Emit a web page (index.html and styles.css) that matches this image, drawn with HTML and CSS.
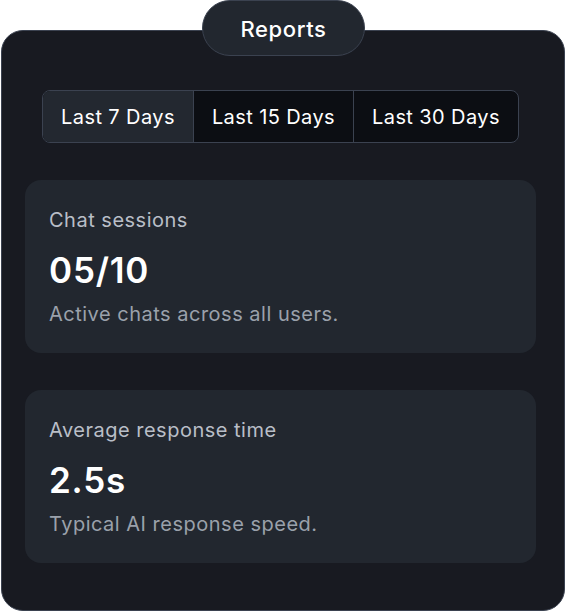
FILE: index.html
```html
<!DOCTYPE html>
<html lang="en">
<head>
<meta charset="utf-8">
<title>Reports</title>
<link rel="stylesheet" href="styles.css">
</head>
<body>
  <div class="frame">
    <section class="panel">
      <div class="pill">Reports</div>
      <div class="tabs">
        <button class="tab active">Last 7 Days</button>
        <button class="tab">Last 15 Days</button>
        <button class="tab">Last 30 Days</button>
      </div>
      <div class="stat">
        <div class="stat-label">Chat sessions</div>
        <div class="stat-value">05/10</div>
        <div class="stat-desc">Active chats across all users.</div>
      </div>
      <div class="stat">
        <div class="stat-label">Average response time</div>
        <div class="stat-value">2.5s</div>
        <div class="stat-desc">Typical AI response speed.</div>
      </div>
    </section>
  </div>
</body>
</html>
```

FILE: styles.css
```css
* { box-sizing: border-box; }
html, body { margin: 0; padding: 0; background: #ffffff; }
body {
  font-family: Inter, "Noto Sans", sans-serif;
  -webkit-font-smoothing: antialiased;
}
.frame {
  padding: 30px 1px 1px 1px;
  width: 566px;
}
.panel {
  position: relative;
  height: 581px;
  background: #181a21;
  border: 1px solid #3b4250;
  border-radius: 22px;
  padding: 59px 28px 0 23px;
  display: flex;
  flex-direction: column;
  align-items: stretch;
  gap: 37px;
}
.pill {
  position: absolute;
  top: -31px;
  left: 200px;
  width: 163px;
  height: 56px;
  border: 1px solid #3b4250;
  border-radius: 28px;
  background: #22272f;
  color: #ffffff;
  font-size: 22px;
  font-weight: 500;
  letter-spacing: 0.6px;
  display: flex;
  align-items: center;
  justify-content: center;
  padding-top: 1px;
}
.tabs {
  align-self: center;
  display: flex;
  height: 53px;
  border: 1px solid #3b4250;
  border-radius: 8px;
  overflow: hidden;
  background: #0c0e13;
}
.tab {
  font-family: inherit;
  font-size: 20px;
  font-weight: 400;
  letter-spacing: 0.4px;
  color: #ffffff;
  background: transparent;
  border: 0;
  border-left: 1px solid #3b4250;
  padding: 0 18px;
  margin: 0;
}
.tab:first-child { border-left: 0; }
.tab.active { background: #232830; }
.stat {
  height: 173px;
  background: #22272f;
  border-radius: 16px;
  padding: 28px 24px 0;
  display: flex;
  flex-direction: column;
}
.stat-label {
  color: #b9bec7;
  font-size: 20px;
  letter-spacing: 0.5px;
  line-height: 24px;
}
.stat-value {
  color: #ffffff;
  font-size: 35px;
  font-weight: 600;
  letter-spacing: 0.8px;
  line-height: 40px;
  margin-top: 18px;
}
.stat-desc {
  color: #9aa1ab;
  font-size: 20px;
  letter-spacing: 0.5px;
  line-height: 24px;
  margin-top: 12px;
}
```
